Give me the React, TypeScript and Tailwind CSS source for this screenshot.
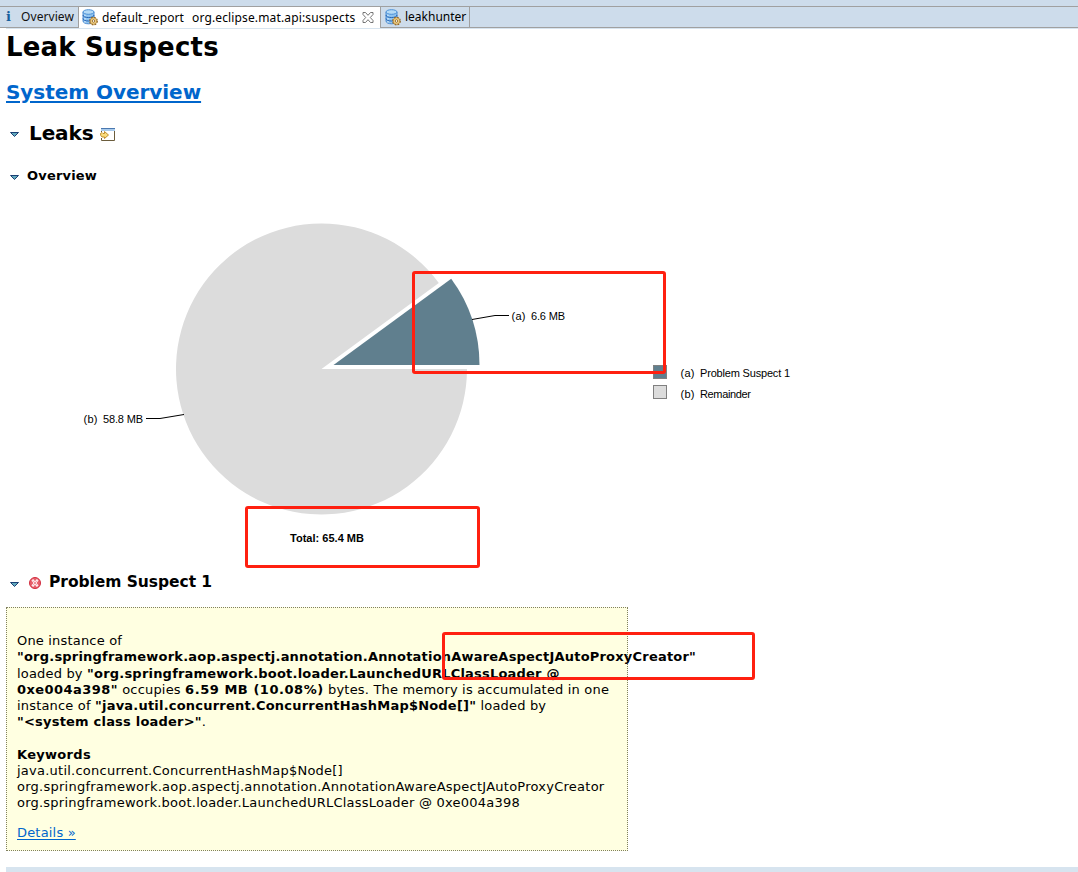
import type { ReactNode } from 'react';

function DbIcon() {
  return (
    <svg width="16" height="17" viewBox="0 0 16 17" className="shrink-0">
      <path d="M1 3v9c0 1.700 2.400 2.800 5.500 2.800S12 13.700 12 12V3z" fill="#8fc4f0" stroke="#3f82cc" strokeWidth="0.900" />
      <path d="M1 6c0 1.700 2.400 2.500 5.500 2.500S12 7.700 12 6M1 9.500c0 1.700 2.400 2.500 5.500 2.500S12 11.200 12 9.500" fill="none" stroke="#2463b4" />
      <path d="M3 5.500v1.500M3 9v1.500M3 12v1.500" stroke="#e2f2ff" />
      <ellipse cx="6.500" cy="3" rx="5.500" ry="2.300" fill="#b4daf6" stroke="#4a8fd6" />
      <circle cx="11.500" cy="12" r="3.600" fill="#f3cf7c" stroke="#8f6424" strokeWidth="1.600" strokeDasharray="1.700 1.130" />
      <circle cx="11.500" cy="12" r="3.200" fill="#f7d88c" stroke="#a87a34" strokeWidth="0.600" />
      <circle cx="11.500" cy="12" r="1.300" fill="#fff" stroke="#8f6424" strokeWidth="0.900" />
    </svg>
  );
}

function CloseIcon() {
  return (
    <svg width="12" height="11" viewBox="0 0 12 11" className="shrink-0">
      <path d="M1 .5h2.500L6 3.300 8.500 .5H11v2L8.300 5.500 11 8.500v2H8.500L6 7.700 3.500 10.500H1v-2l2.700-3L1 2.500z" fill="#fff" stroke="#666" strokeWidth="0.900" />
    </svg>
  );
}

function Twisty() {
  return (
    <svg width="9" height="5" viewBox="0 0 9 5" className="shrink-0">
      <path d="M.5 .5h8L4.500 4.500z" fill="#62aabd" stroke="#1a3f74" />
    </svg>
  );
}

function OpenIcon() {
  return (
    <svg width="15" height="13" viewBox="0 0 15 13" className="shrink-0">
      <path d="M1.500 2.500h13v10h-13z" fill="#fff" stroke="#6b5c3c" />
      <path d="M1 0h14v3H1z" fill="#4a78b0" />
      <path d="M1 1h14v2H1z" fill="#a9cbec" />
      <path d="M0 4h2v6H0z" fill="#fff" />
      <path d="M.5 5.500l1.500-1 1 1h1.500V3.500L8.500 7 4.500 10.500V9H2L.8 7.500z" fill="#f9dc7d" stroke="#b98420" strokeWidth="0.900" />
    </svg>
  );
}

function ErrorIcon() {
  return (
    <svg width="12" height="12" viewBox="0 0 12 12" className="shrink-0">
      <circle cx="6" cy="6" r="5.500" fill="#e8606c" stroke="#d02c3e" />
      <path d="M3.300 2.800l5.400 6.400M8.700 2.800l-5.400 6.400" stroke="#fff" strokeWidth="2.200" />
      <path d="M4 3.600l4 4.800M8 3.600l-4 4.800" stroke="#e04454" strokeWidth="0.600" />
    </svg>
  );
}

function B({ children }: { children: ReactNode }) {
  return <b className="tracking-[0.205px]">{children}</b>;
}

function Chart() {
  return (
    <svg width="1078" height="375" viewBox="0 190 1078 375" className="block font-['Liberation_Sans',sans-serif] text-[11px]">
      <path d="M321.500 369H467A145.500 145.500 0 1 1 438.800 282.900Z" fill="#dcdcdc" />
      <path d="M333.500 365H479.500A146 146 0 0 0 451.200 278.800Z" fill="#607f8e" />
      <path d="M472 319.500L495 315.500H509M146 418.500H160L184 414.500" fill="none" stroke="#000" />
      <text x="511.500" y="320" textLength="14">(a)</text>
      <text x="531" y="320" textLength="34">6.6 MB</text>
      <text x="83.500" y="423" textLength="14">(b)</text>
      <text x="103" y="423" textLength="40">58.8 MB</text>
      <text x="290" y="542" textLength="74" fontWeight="bold">Total: 65.4 MB</text>
      <rect x="653.500" y="365.500" width="13" height="13" fill="#607f8e" stroke="#808080" />
      <rect x="653.500" y="385.500" width="13" height="13" fill="#dcdcdc" stroke="#808080" />
      <text x="680.500" y="377" textLength="14">(a)</text>
      <text x="700" y="377" textLength="90">Problem Suspect 1</text>
      <text x="680.500" y="398" textLength="14">(b)</text>
      <text x="700" y="398" textLength="51">Remainder</text>
    </svg>
  );
}

export default function App() {
  return (
    <div className="relative h-[872px] w-[1078px] overflow-hidden bg-white font-['DejaVu_Sans',sans-serif] text-[13px] text-black">
      <div className="flex h-7 bg-[#cddceb] pt-1.5 font-['Noto_Sans',sans-serif] text-[12px] leading-[20px]">
        <div className="flex h-[22px] w-[79px] border-y border-r border-[#a0a0a0] pl-1.5 text-[#111]">
          <span className="w-[15px] font-['DejaVu_Serif',serif] text-[13px] font-bold text-[#17609c]">i</span>
          <span className="tracking-[0.080px]">Overview</span>
        </div>
        <div className="flex h-[22px] w-[301px] items-center border-t border-[#a0a0a0] bg-white pl-[3px]">
          <DbIcon />
          <span className="ml-1 w-[90px] tracking-[0.100px]">default_report</span>
          <span className="w-[170px] whitespace-nowrap tracking-[0.140px]">org.eclipse.mat.api:suspects</span>
          <CloseIcon />
        </div>
        <div className="flex h-[22px] w-[90px] items-center border border-[#a0a0a0] pl-1">
          <DbIcon />
          <span className="ml-1">leakhunter</span>
        </div>
        <div className="h-[22px] flex-1 border-y border-[#a0a0a0]" />
      </div>
      <div className="ml-1.5 h-px bg-[#d7e4ef]" />

      <h1 className="mt-[3px] h-[30px] pl-1.5 text-[26px] leading-[30px] font-bold tracking-[0.190px]">Leak Suspects</h1>
      <h2 className="mt-[18px] h-6 pl-1.5 text-[20px] leading-6 font-bold tracking-[-0.040px]">
        <a className="text-[#0066cc] underline decoration-2 underline-offset-2">System Overview</a>
      </h2>
      <div className="mt-[17px] flex h-6 items-center pl-2.5">
        <div className="pt-[3px]"><Twisty /></div>
        <h2 className="ml-2.5 text-[20px] leading-6 font-bold tracking-[-0.100px]">Leaks</h2>
        <div className="ml-1.5 pt-[3px]"><OpenIcon /></div>
      </div>
      <div className="mt-[21px] flex h-5 items-center pl-2.5">
        <div className="pt-0.5"><Twisty /></div>
        <h3 className="ml-2 text-[13px] leading-5 font-bold tracking-[0.180px]">Overview</h3>
      </div>
      <div className="mt-1"><Chart /></div>
      <div className="mt-[7px] flex h-5 items-center pl-2.5">
        <div className="pt-1"><Twisty /></div>
        <div className="ml-2.5 pt-0.5"><ErrorIcon /></div>
        <h3 className="ml-2 text-[15.5px] leading-5 font-bold tracking-[-0.050px]">Problem Suspect 1</h3>
      </div>

      <div className="mt-[15px] ml-1.5 h-[244px] w-[622px] border border-dotted border-[#808060] bg-[#ffffe1] px-2.5 pt-[25px] leading-4 tracking-[0.180px] whitespace-pre">
        <div>One instance of</div>
        <div><B>"org.springframework.aop.aspectj.annotation.AnnotationAwareAspectJAutoProxyCreator"</B></div>
        <div className="mt-px">loaded by <B>"org.springframework.boot.loader.LaunchedURLClassLoader @</B></div>
        <div><b className="tracking-[0.440px]">0xe004a398"</b> occupies <b className="tracking-[0.540px]">6.59 MB (10.08%)</b> bytes. The memory is accumulated in one</div>
        <div>instance of <B>"java.util.concurrent.ConcurrentHashMap$Node[]"</B> loaded by</div>
        <div><B>"&lt;system class loader&gt;"</B>.</div>
        <div className="mt-[17px]"><b className="tracking-[0.300px]">Keywords</b></div>
        <div className="tracking-[0.240px]">java.util.concurrent.ConcurrentHashMap$Node[]</div>
        <div className="tracking-[0.250px]">org.springframework.aop.aspectj.annotation.AnnotationAwareAspectJAutoProxyCreator</div>
        <div className="tracking-[0.227px]">org.springframework.boot.loader.LaunchedURLClassLoader @ 0xe004a398</div>
        <a className="mt-3.5 block text-[#0066cc] underline underline-offset-2">Details »</a>
      </div>
      <div className="mt-4 ml-1.5 h-[5px] bg-[#d7e4ef]" />

      <div className="absolute top-[271px] left-[412px] h-[103px] w-[254px] rounded-[3px] border-3 border-[#ff2010]" />
      <div className="absolute top-[506px] left-[245px] h-[62px] w-[235px] rounded-[3px] border-3 border-[#ff2010]" />
      <div className="absolute top-[632px] left-[442px] h-12 w-[313px] rounded-[3px] border-3 border-[#ff2010]" />
    </div>
  );
}
